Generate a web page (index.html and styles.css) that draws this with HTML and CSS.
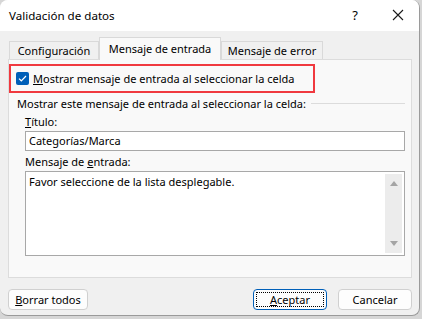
FILE: index.html
```html
<!DOCTYPE html>
<html lang="es">

<head>
    <meta charset="UTF-8">
    <meta name="viewport" content="width=device-width, initial-scale=1.0">
    <title>Validación de datos</title>
    <link rel="stylesheet" href="styles.css">
</head>

<body>
    <div class="dialog">
        <div class="titlebar">
            <span class="title">Validación de datos</span>
            <span class="help">?</span>
            <svg class="close" width="12" height="12" viewBox="0 0 12 12">
                <path d="M1 1 L11 11 M11 1 L1 11" stroke="#1a1a1a" stroke-width="1.1" fill="none" />
            </svg>
        </div>

        <div class="content">
            <div class="tabs">
                <div class="tab">Configuración</div>
                <div class="tab active">Mensaje de entrada</div>
                <div class="tab">Mensaje de error</div>
            </div>

            <div class="panel">
                <div class="check-row">
                    <span class="checkbox">
                        <svg width="9" height="7" viewBox="0 0 9 7">
                            <path d="M1 3.6 L3.3 5.8 L8 1" stroke="#fff" stroke-width="1.2" fill="none" />
                        </svg>
                    </span>
                    <span><u>M</u>ostrar mensaje de entrada al seleccionar la celda</span>
                </div>

                <div class="group-title">
                    <span>Mostrar este mensaje de entrada al seleccionar la celda:</span>
                    <span class="group-line"></span>
                </div>

                <div class="field">
                    <div class="field-label"><u>T</u>ítulo:</div>
                    <div class="input">Categorías/Marca</div>
                </div>

                <div class="field">
                    <div class="field-label">Mensaje de <u>e</u>ntrada:</div>
                    <div class="textarea">
                        <div class="textarea-text">Favor seleccione de la lista desplegable.</div>
                        <div class="scrollbar">
                            <span class="arrow-up"></span>
                            <span class="arrow-down"></span>
                        </div>
                    </div>
                </div>
            </div>

            <div class="buttons">
                <button class="btn"><u>B</u>orrar todos</button>
                <span class="spacer"></span>
                <button class="btn default"><span class="focus"><u>A</u>ceptar</span></button>
                <button class="btn">Cancelar</button>
            </div>
        </div>
    </div>
</body>

</html>
```

FILE: styles.css
```css
body {
    margin: 0;
    background: #d6d6d6;
    font-family: "Noto Sans", "Open Sans", sans-serif;
    font-size: 11px;
    color: #000;
    white-space: nowrap;
}

.dialog {
    width: 420px;
    height: 316px;
    background: #f0f0f0;
    border-radius: 8px;
    overflow: hidden;
    border-right: 1px solid #9a9a9a;
    border-bottom: 1px solid #9a9a9a;
    box-sizing: border-box;
}

.titlebar {
    height: 31px;
    background: #fff;
    display: flex;
    align-items: center;
    padding-left: 9px;
    padding-bottom: 1px;
    box-sizing: border-box;
}

.title {
    flex: 1;
    font-size: 11.6px;
}

.help {
    font-size: 13px;
    margin-right: 34px;
}

.close {
    margin-right: 15px;
}

.content {
    padding: 7px 7px 0 8px;
}

.tabs {
    display: flex;
    align-items: flex-end;
    height: 21px;
    padding-left: 1px;
    position: relative;
    z-index: 1;
}

.tab {
    height: 18px;
    line-height: 17px;
    padding: 0;
    border: 1px solid #d9d9d9;
    border-bottom: none;
    box-sizing: border-box;
    background: #f0f0f0;
    text-align: center;
}

.tab:first-child {
    width: 90px;
}

.tab.active {
    height: 23px;
    line-height: 21px;
    background: #f9f9f9;
    width: 122px;
    margin-bottom: -1px;
}

.tab:last-child {
    width: 102px;
}

.panel {
    height: 219px;
    border: 1px solid #dcdcdc;
    background: #f9f9f9;
    box-sizing: border-box;
    padding: 4px 6px 0 0;
}

.check-row {
    width: 306px;
    height: 29px;
    border: 2px solid #f0393f;
    box-sizing: border-box;
    display: flex;
    align-items: center;
    gap: 4px;
    padding-left: 5px;
}

.checkbox {
    width: 13px;
    height: 13px;
    background: #005fb8;
    border-radius: 2px;
    display: flex;
    align-items: center;
    justify-content: center;
}

.group-title {
    display: flex;
    align-items: center;
    gap: 5px;
    margin: 2px 0 0 8px;
    height: 16px;
}

.group-line {
    flex: 1;
    height: 1px;
    background: #dcdcdc;
}

.field {
    padding-left: 16px;
}

.field-label {
    height: 15px;
    line-height: 15px;
    margin-top: 3px;
    margin-bottom: 2px;
}

.input {
    height: 20px;
    line-height: 18px;
    border: 1px solid #a8a8a8;
    background: #fff;
    box-sizing: border-box;
    padding-left: 3px;
}

.textarea {
    height: 85px;
    border: 1px solid #a8a8a8;
    background: #fff;
    box-sizing: border-box;
    display: flex;
    padding: 1px;
}

.textarea-text {
    flex: 1;
    padding: 1px 2px;
    line-height: 16px;
}

.scrollbar {
    width: 17px;
    margin: 1px 1px 1px 0;
    background: #ececec;
    display: flex;
    flex-direction: column;
    justify-content: space-between;
    align-items: center;
    padding: 7px 0;
}

.arrow-up {
    border-left: 4px solid transparent;
    border-right: 4px solid transparent;
    border-bottom: 5px solid #a4a4a4;
}

.arrow-down {
    border-left: 4px solid transparent;
    border-right: 4px solid transparent;
    border-top: 5px solid #a4a4a4;
}

.buttons {
    display: flex;
    margin-top: 11px;
    gap: 11px;
}

.spacer {
    flex: 1;
}

.btn {
    font-family: inherit;
    font-size: 11px;
    color: #000;
    height: 21px;
    width: 74px;
    padding: 0;
    background: #fdfdfd;
    border: 1px solid #d0d0d0;
    border-radius: 4px;
}

.btn:first-child {
    width: 80px;
}

.btn.default {
    border-color: #005fb8;
    padding: 2px;
}

.focus {
    display: block;
    height: 100%;
    line-height: 13px;
    border: 1px dotted #000;
    box-sizing: border-box;
}
```
